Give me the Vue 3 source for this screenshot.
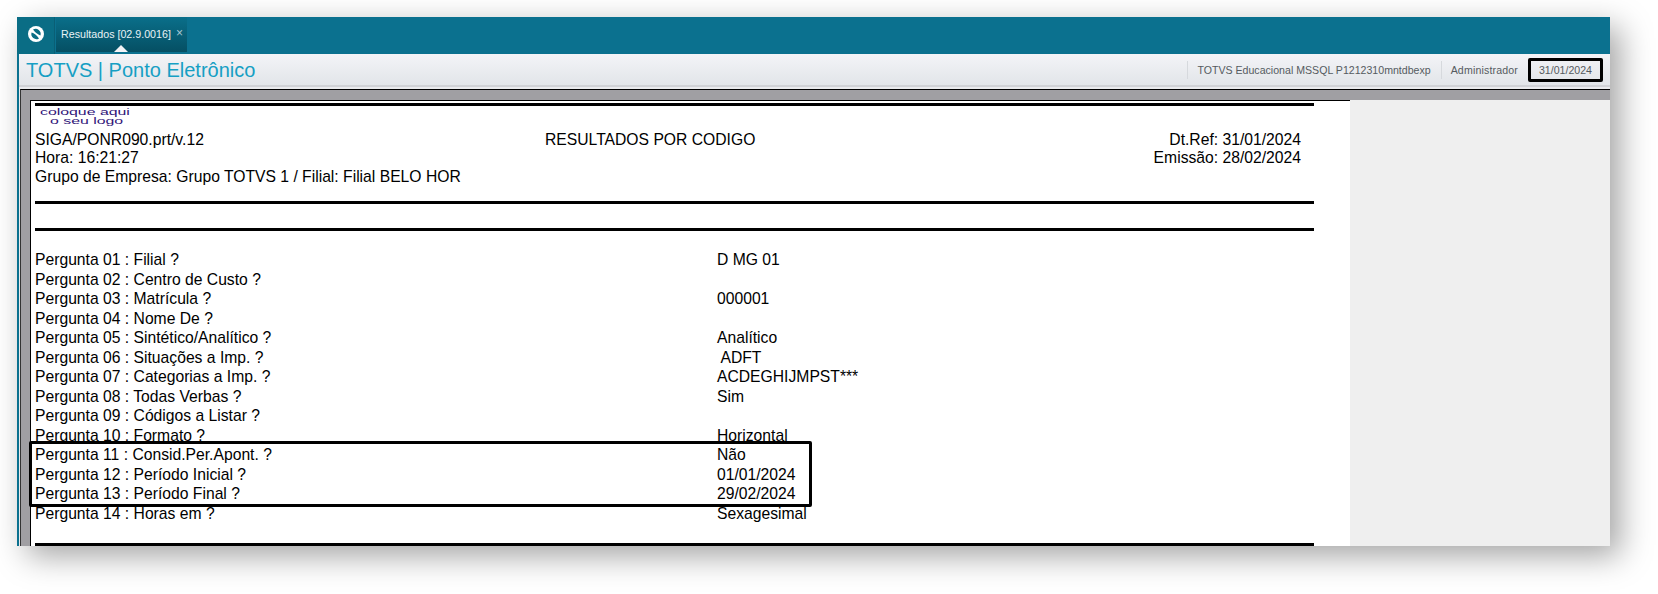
<script setup>
const questions = [
  ['Pergunta 01 : Filial ?', 'D MG 01'],
  ['Pergunta 02 : Centro de Custo ?', ''],
  ['Pergunta 03 : Matrícula ?', '000001'],
  ['Pergunta 04 : Nome De ?', ''],
  ['Pergunta 05 : Sintético/Analítico ?', 'Analítico'],
  ['Pergunta 06 : Situações a Imp. ?', ' ADFT'],
  ['Pergunta 07 : Categorias a Imp. ?', 'ACDEGHIJMPST***'],
  ['Pergunta 08 : Todas Verbas ?', 'Sim'],
  ['Pergunta 09 : Códigos a Listar ?', ''],
  ['Pergunta 10 : Formato ?', 'Horizontal'],
  ['Pergunta 11 : Consid.Per.Apont. ?', 'Não'],
  ['Pergunta 12 : Período Inicial ?', '01/01/2024'],
  ['Pergunta 13 : Período Final ?', '29/02/2024'],
  ['Pergunta 14 : Horas em ?', 'Sexagesimal'],
]
</script>

<template>
  <div class="stage">
    <div class="window">
      <header class="topbar">
        <div class="brand">
          <svg width="18" height="18" viewBox="0 0 18 18">
            <circle cx="9" cy="9" r="8" fill="#fff" />
            <path d="M6 4.6 A5 5 0 0 1 13.4 10.4 Q9.5 9.4 6 4.6 Z" fill="#0a6d85" />
            <path d="M12 13.4 A5 5 0 0 1 4.6 7.6 Q8.5 8.6 12 13.4 Z" fill="#0a6d85" />
          </svg>
        </div>
        <div class="tab">
          <span class="tab-label">Resultados [02.9.0016]</span>
          <span class="tab-close">×</span>
          <span class="tab-arrow"></span>
        </div>
      </header>

      <div class="body">
        <div class="toolbar">
          <h1 class="title">TOTVS | Ponto Eletrônico</h1>
          <div class="status">
            <span class="status-item">TOTVS Educacional MSSQL P1212310mntdbexp</span>
            <span class="status-item status-user">Administrador</span>
            <span class="status-date">31/01/2024</span>
          </div>
        </div>

        <div class="workspace">
          <div class="paper">
            <div class="rule rule-top"></div>
            <div class="logo">
              <span class="logo-a">coloque aqui</span>
              <span class="logo-b">o seu logo</span>
            </div>
            <div class="head">
              <span>SIGA/PONR090.prt/v.12</span>
              <span>RESULTADOS POR CODIGO</span>
              <span class="head-right">Dt.Ref: 31/01/2024</span>
              <span>Hora: 16:21:27</span>
              <span></span>
              <span class="head-right">Emissão: 28/02/2024</span>
              <span class="head-wide">Grupo de Empresa: Grupo TOTVS 1 / Filial: Filial BELO HOR</span>
            </div>
            <div class="rule"></div>
            <div class="rule rule-b"></div>
            <div class="questions">
              <div v-for="q in questions" :key="q[0]" class="row">
                <span class="question">{{ q[0] }}</span>
                <span>{{ q[1] }}</span>
              </div>
              <div class="callout"></div>
            </div>
            <div class="rule"></div>
          </div>
          <div class="side"></div>
        </div>
      </div>
    </div>
  </div>
</template>

<style>
html, body { margin: 0; background: #fff; overflow: hidden; }
</style>

<style scoped>
.stage {
  width: 1658px;
  height: 594px;
  padding: 17px 48px 48px 17px;
  box-sizing: border-box;
  background: #fff;
}
.window {
  width: 1593px;
  height: 529px;
  display: flex;
  flex-direction: column;
  overflow: hidden;
  box-shadow: 10px 10px 30px rgba(0, 0, 0, 0.36);
  background: #0b718f;
  font-family: "Liberation Sans", Arial, sans-serif;
}
.topbar {
  height: 37px;
  flex: none;
  display: flex;
  background: #0b718f;
}
.brand {
  width: 38px;
  margin-right: 1px;
  display: flex;
  align-items: center;
  justify-content: center;
  padding-bottom: 3px;
  box-sizing: border-box;
  background: #0a6d85;
  border-right: 1px solid #0a5f75;
}
.tab {
  width: 131px;
  height: 35px;
  position: relative;
  display: flex;
  align-items: flex-start;
  padding: 11px 0 0 5px;
  box-sizing: border-box;
  color: #e8f3f6;
  font-size: 10.7px;
  line-height: 12px;
  background: linear-gradient(#0a6f8a, #054f63);
}
.tab-label { white-space: nowrap; }
.tab-close {
  margin-left: 5px;
  margin-top: -1px;
  font-size: 12px;
  color: #a9c9d3;
}
.tab-arrow {
  position: absolute;
  left: 58px;
  bottom: 0;
  width: 0;
  height: 0;
  border-left: 7px solid transparent;
  border-right: 7px solid transparent;
  border-bottom: 7px solid #f2f3f6;
}
.body {
  flex: 1;
  min-height: 0;
  margin-left: 2px;
  display: flex;
  flex-direction: column;
  background: #e9eaed;
}
.toolbar {
  height: 33px;
  flex: none;
  padding: 0 7px 0 7px;
  display: flex;
  align-items: center;
  justify-content: space-between;
  box-sizing: border-box;
  background: linear-gradient(#f3f4f7, #e2e5e9);
  border-bottom: 2px solid #d0d2d6;
}
.title {
  margin: 0;
  color: #169fc4;
  font-size: 20px;
  font-weight: 400;
  line-height: 24px;
  white-space: nowrap;
}
.status {
  display: flex;
  align-items: center;
  font-size: 10.6px;
  color: #555b60;
}
.status-item {
  height: 18px;
  line-height: 18px;
  padding: 0 10px 0 9px;
  border-left: 1px solid #d6d9dd;
  white-space: nowrap;
}
.status-user { letter-spacing: 0.15px; }
.status-date {
  height: 24px;
  line-height: 18px;
  padding: 0 8px;
  box-sizing: border-box;
  border: 3px solid #000;
  border-radius: 2px;
  white-space: nowrap;
}
.workspace {
  flex: 1;
  display: flex;
  min-height: 0;
  margin: 2px 0 0 1px;
  padding: 10px 0 0 9px;
  box-sizing: border-box;
  background: #a09fa3;
  border-top: 1px solid #000;
  border-left: 1px solid #333;
}
.paper {
  width: 1320px;
  flex: none;
  padding-left: 4px;
  box-sizing: border-box;
  background: #fff;
  border-top: 1px solid #000;
  border-left: 1px solid #000;
  color: #000;
  font-size: 15.7px;
}
.side {
  flex: 1;
  background: #efefef;
}
.rule {
  width: 1279px;
  height: 3px;
  background: #000;
}
.rule-top { margin-top: 2px; }
.rule-b { margin-top: 24px; }
.logo {
  height: 24px;
  padding-top: 3px;
  box-sizing: border-box;
  color: #2f1478;
  font-size: 12px;
  line-height: 9px;
  white-space: nowrap;
}
.logo-a, .logo-b {
  display: block;
  transform-origin: left top;
  transform: scale(1.32, 0.75);
}
.logo-a { margin-left: 5px; }
.logo-b { margin-left: 15px; }
.head {
  display: grid;
  grid-template-columns: 510px 1fr 300px;
  grid-auto-rows: 18.3px;
  line-height: 18.3px;
  width: 1266px;
  height: 71px;
  padding-top: 1px;
  box-sizing: border-box;
}
.head-right { text-align: right; }
.head-wide { grid-column: 1 / -1; }
.questions {
  position: relative;
  padding-top: 19px;
  height: 312px;
  box-sizing: border-box;
  line-height: 19.54px;
}
.row {
  display: flex;
  height: 19.54px;
  white-space: pre;
}
.question { width: 682px; flex: none; }
.callout {
  position: absolute;
  left: -6px;
  top: 210px;
  width: 777px;
  height: 60px;
  border: 3px solid #000;
  border-radius: 2px;
  pointer-events: none;
}
</style>
